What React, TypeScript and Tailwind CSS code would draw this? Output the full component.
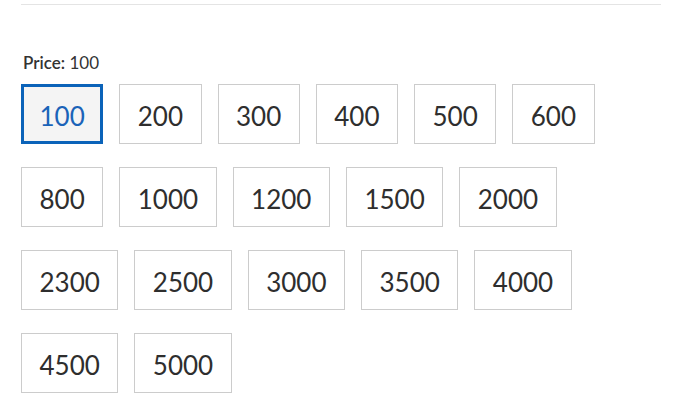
import React, { useState } from 'react';

const PRICES = [100, 200, 300, 400, 500, 600, 800, 1000, 1200, 1500, 2000, 2300, 2500, 3000, 3500, 4000, 4500, 5000];

export default function App() {
  const [price, setPrice] = useState(100);

  return (
    <div className="min-h-screen bg-white px-[21px] pt-1 text-[#333]" style={{ fontFamily: 'Lato, "Open Sans", sans-serif' }}>
      <div className="border-t border-[#e4e4e4]" />

      <div className="mt-[48px] ml-[2px] text-[17px] leading-[20px]">
        <span className="font-semibold">Price:</span> <span>{price}</span>
      </div>

      <div className="mt-[11px] flex flex-wrap">
        {PRICES.map((p) => {
          const active = p === price;
          return (
            <button
              key={p}
              onClick={() => setPrice(p)}
              className={
                'mr-4 mb-[23px] flex h-[60px] items-center pt-[5px] text-[26px] ' +
                (active
                  ? 'border-[3px] border-[#0b63b9] bg-[#f4f4f4] px-[15.5px] text-[#1a63b8]'
                  : 'border border-[#cccccc] bg-white px-[17.5px] text-[#2e2e2e]')
              }
            >
              {p}
            </button>
          );
        })}
      </div>
    </div>
  );
}
